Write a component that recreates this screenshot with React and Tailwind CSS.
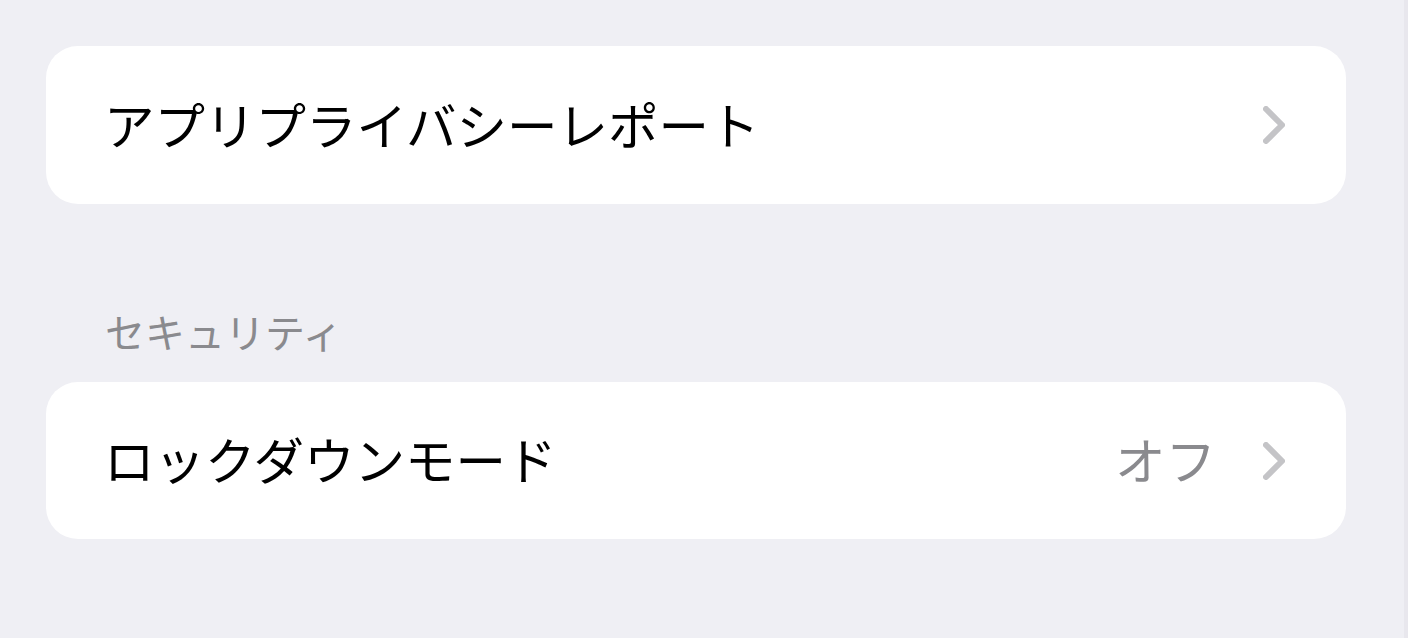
import React from "react";

const jp = { fontFamily: '"Noto Sans CJK JP", "Noto Sans", sans-serif' };

function Chevron() {
  return (
    <svg width="22" height="38" viewBox="0 0 22 38" className="shrink-0">
      <path
        d="M3 3 L19 19 L3 35"
        fill="none"
        stroke="#c4c4c7"
        strokeWidth="6"
        strokeLinecap="round"
        strokeLinejoin="round"
      />
    </svg>
  );
}

function Row({ label, value, height }) {
  return (
    <div
      className={`flex items-center w-[1300px] ${height} rounded-[32px] bg-white pl-[58px] pr-[61px]`}
    >
      <span className="flex-1 text-[50.5px] leading-none text-black pb-[4px]" style={jp}>
        {label}
      </span>
      {value && (
        <span className="text-[50.5px] leading-none text-[#8a8a8e] mr-[47px] pb-[4px]" style={jp}>
          {value}
        </span>
      )}
      <Chevron />
    </div>
  );
}

export default function App() {
  return (
    <div className="flex w-[1408px] h-[638px] bg-[#efeff4] overflow-hidden">
      <div className="flex flex-col w-[1404px] pl-[46px] pt-[46px]">
        <Row label="アプリプライバシーレポート" height="h-[158px]" />
        <div className="flex items-end h-[178px] pl-[59px] pb-[31px]">
          <span className="text-[40px] leading-none text-[#8a8a8e]" style={jp}>
            セキュリティ
          </span>
        </div>
        <Row label="ロックダウンモード" value="オフ" height="h-[157px]" />
      </div>
      <div className="w-[4px] h-full bg-[#e8e7ed]" />
    </div>
  );
}
